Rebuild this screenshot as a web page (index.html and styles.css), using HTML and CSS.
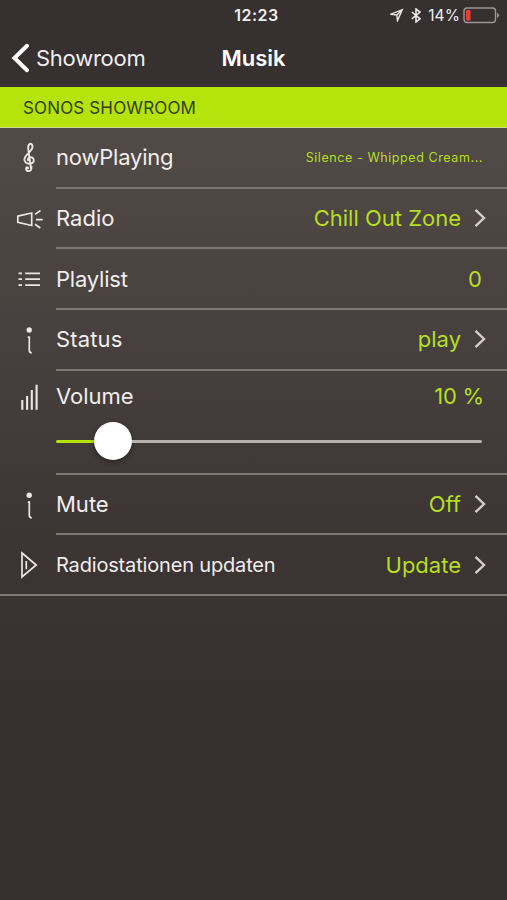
FILE: index.html
```html
<!DOCTYPE html>
<html lang="de">
<head>
<meta charset="utf-8">
<title>Musik</title>
<link rel="stylesheet" href="styles.css">
</head>
<body>
<div class="screen">
  <header class="status">
    <span class="time">12:23</span>
    <div class="indicators">
      <svg class="location" width="14" height="14" viewBox="0 0 14 14"><path d="M1 6.2 12.2 1.7 7.5 12.6 6.8 7.1Z M6.8 7.1 12.2 1.7"/></svg>
      <svg class="bluetooth" width="10" height="15" viewBox="0 0 10 15"><path d="M.8 4 9 10.8 5 14V1L9 4.1.8 10.9"/></svg>
      <span class="percent">14%</span>
      <svg class="battery" width="37" height="17" viewBox="0 0 37 17"><rect class="shell" x="1" y="1" width="31.5" height="14.5" rx="3"/><rect class="charge" x="3" y="3" width="4.5" height="10.5" rx="1"/><path class="cap" d="M34 5.5Q38 8 34 11Z"/></svg>
    </div>
  </header>
  <nav class="nav">
    <a class="back"><svg width="20" height="30" viewBox="0 0 20 30"><path d="M17 2.8 4.5 15 17 27.2"/></svg><span class="back-label">Showroom</span></a>
    <h1 class="title">Musik</h1>
  </nav>
  <h2 class="section">SONOS SHOWROOM</h2>
  <main class="list">
    <div class="row">
      <svg class="icon" viewBox="0 0 58 60"><path class="clef" d="M31.2 42 28.2 21C27.7 15.5 31.6 13.8 32.5 18.2 33.2 23.3 25 25.8 24.4 31.4 24 37 34.2 37 33.8 32.2 33.4 27.8 26.6 28.6 28.2 33M31.4 38V40.3C31.2 44.1 26.2 43.9 26.1 40.6 26.2 38.6 28.8 39.1 28 41"/></svg>
      <div class="cell"><span class="label now">nowPlaying</span><span class="value small">Silence - Whipped Cream...</span></div>
    </div>
    <div class="row">
      <svg class="icon" viewBox="0 0 58 60"><path d="M17.8 27.2 31.7 24V36.5L17.8 33.3ZM35 25.4 40.5 21.5M36 30.7H42.7M35 35.3 40.3 39"/></svg>
      <div class="cell"><span class="label">Radio</span><span class="value">Chill Out Zone</span><svg class="chevron" viewBox="0 0 12 20"><path d="M1.5 1.8 10 10 1.5 18.2"/></svg></div>
    </div>
    <div class="row">
      <svg class="icon" viewBox="0 0 58 60"><path d="M18.5 24.3H22M25.2 24.3H40M18.5 30.2H22M25.2 30.2H40M18.5 36.2H22M25.2 36.2H40"/></svg>
      <div class="cell"><span class="label playlist">Playlist</span><span class="value">0</span></div>
    </div>
    <div class="row">
      <svg class="icon" viewBox="0 0 58 60"><circle cx="29.2" cy="20" r="2.7"/><path d="M27.8 27.2H29.3V40.5Q29.3 42.8 31.8 42.8"/></svg>
      <div class="cell"><span class="label state">Status</span><span class="value">play</span><svg class="chevron" viewBox="0 0 12 20"><path d="M1.5 1.8 10 10 1.5 18.2"/></svg></div>
    </div>
    <div class="row volume">
      <svg class="icon" viewBox="0 0 58 60"><path class="bars" d="M22.3 38.7V29M27.1 38.7V25M31.8 38.7V19M36.6 38.7V13.7"/></svg>
      <div class="cell">
        <div class="line"><span class="label">Volume</span><span class="value amount">10 %</span></div>
        <div class="slider"><span class="filled"></span><span class="knob"></span><span class="rest"></span></div>
      </div>
    </div>
    <div class="row">
      <svg class="icon" viewBox="0 0 58 60"><circle cx="29.2" cy="20.2" r="2.7"/><path d="M27.8 27.2H29.3V40.5Q29.3 42.8 31.8 42.8"/></svg>
      <div class="cell"><span class="label">Mute</span><span class="value">Off</span><svg class="chevron" viewBox="0 0 12 20"><path d="M1.5 1.8 10 10 1.5 18.2"/></svg></div>
    </div>
    <div class="row last">
      <svg class="icon" viewBox="0 0 58 60"><path d="M22 18 36.2 30 22 42ZM26.3 26V34.3"/></svg>
      <div class="cell"><span class="label update">Radiostationen updaten</span><span class="value">Update</span><svg class="chevron" viewBox="0 0 12 20"><path d="M1.5 1.8 10 10 1.5 18.2"/></svg></div>
    </div>
  </main>
</div>
</body>
</html>
```
FILE: styles.css
```css
* { box-sizing: border-box; }
body { margin: 0; background: #373030; font-family: Inter, "Liberation Sans", sans-serif; color: #f0eeed; }
svg { display: block; flex: none; fill: none; stroke: #eae7e6; }
.screen { height: 900px; overflow: hidden; background: linear-gradient(#514a47 128px, #4b4441 250px, #453e3d 380px, #3e3735 500px, #3a3331 600px, #373030 700px); }
.status { display: grid; grid-template-columns: 1fr auto 1fr; height: 30px; align-items: center; background: #373030; }
.time { grid-column: 2; font-size: 16px; font-weight: 600; letter-spacing: .5px; padding-left: 6px; }
.indicators { display: flex; align-items: center; justify-content: flex-end; padding-right: 7px; }
.location { stroke-width: 1.4; margin-right: 7px; }
.bluetooth { stroke-width: 1.6; margin-right: 7px; }
.percent { font-size: 15.5px; letter-spacing: .1px; margin-right: 3px; }
.shell { stroke: #9b9593; stroke-width: 1.4; }
.charge { fill: #f13c2e; stroke: none; }
.cap { fill: #9b9593; stroke: none; }
.nav { display: grid; grid-template-columns: 1fr auto 1fr; align-items: center; height: 57px; padding-bottom: 2px; background: #373030; }
.back { display: flex; align-items: center; gap: 6px; padding-left: 10px; }
.back svg { stroke: #fff; stroke-width: 4; stroke-linecap: round; }
.back-label { font-size: 22px; letter-spacing: -.25px; }
.title { margin: 0; font-size: 22px; font-weight: 600; color: #fff; }
.section { margin: 0; height: 41px; line-height: 42px; padding-left: 23px; background: #b5e30c; color: #334006; font-size: 17px; font-weight: 400; letter-spacing: .15px; border-bottom: 1px solid #cbdc91; }
.list { border-bottom: 2px solid #7e7774; }
.row { display: flex; height: 60.7px; }
.icon { width: 58px; height: 60px; margin-right: -2px; stroke-width: 1.7; }
.icon circle { fill: #eae7e6; stroke: none; }
.clef { stroke-width: 1.9; }
.bars { stroke-width: 2.1; }
.cell { flex: 1; display: flex; align-items: center; padding-right: 21px; border-bottom: 2px solid #7e7774; }
.last { height: 59px; }
.last .cell { border: 0; }
.label { font-size: 22px; white-space: nowrap; }
.now, .playlist { letter-spacing: -.2px; }
.state { letter-spacing: .15px; }
.value { margin-left: auto; margin-right: 4px; color: #b5df20; font-size: 22px; white-space: nowrap; }
.small { font-size: 12.5px; letter-spacing: .58px; margin-right: 3px; }
.amount { letter-spacing: -.2px; margin-right: 2px; }
.chevron { width: 12px; height: 20px; stroke: #d2cecc; stroke-width: 2.4; margin-left: 9px; }
.volume { height: 104px; }
.volume .cell { flex-direction: column; align-items: stretch; }
.line { display: flex; align-items: center; height: 51px; }
.slider { display: flex; align-items: center; height: 38px; margin-right: 4px; }
.filled { width: 38px; height: 3px; margin-top: 1px; background: #b5e30c; border-radius: 2px 0 0 2px; }
.knob { width: 38px; height: 38px; border-radius: 50%; background: #fff; box-shadow: 0 2px 5px #0006; }
.rest { flex: 1; height: 3px; margin-top: 1px; background: #b8b1ae; border-radius: 0 2px 2px 0; }
.update { font-size: 20px; letter-spacing: -.17px; }
```
